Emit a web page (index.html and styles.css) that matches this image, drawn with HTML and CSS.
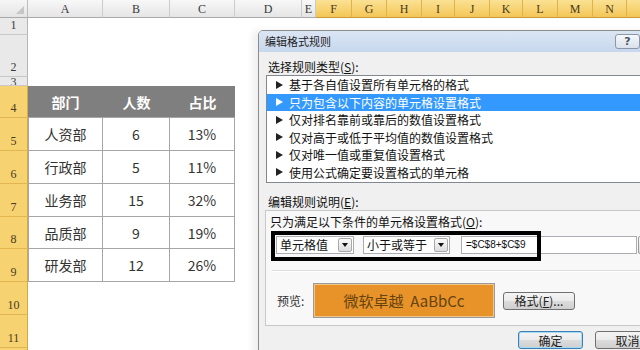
FILE: index.html
```html
<!DOCTYPE html>
<html>
<head>
<meta charset="utf-8">
<link rel="stylesheet" href="styles.css">
</head>
<body>
<div class="screen">
  <div class="colheads">
    <div class="corner"><span class="corner-tri"></span></div>
    <div class="ch w-a">A</div>
    <div class="ch w-b">B</div>
    <div class="ch w-c">C</div>
    <div class="ch w-d">D</div>
    <div class="ch w-e">E</div>
    <div class="ch sel w-f">F</div>
    <div class="ch sel w-g">G</div>
    <div class="ch sel w-h">H</div>
    <div class="ch sel w-i">I</div>
    <div class="ch sel w-j">J</div>
    <div class="ch sel w-k">K</div>
    <div class="ch sel w-l">L</div>
    <div class="ch sel w-m">M</div>
    <div class="ch sel w-n">N</div>
    <div class="ch sel w-o"></div>
  </div>
  <div class="sheet">
    <div class="rowheads">
      <div class="rh r1">1</div>
      <div class="rh r2">2</div>
      <div class="rh r3">3</div>
      <div class="rh sel r4">4</div>
      <div class="rh sel r5">5</div>
      <div class="rh sel r6">6</div>
      <div class="rh sel r7">7</div>
      <div class="rh sel r8">8</div>
      <div class="rh sel r9">9</div>
      <div class="rh sel r10">10</div>
      <div class="rh sel r11">11</div>
      <div class="rh sel r12"></div>
    </div>
    <div class="cells">
      <div class="tbl">
        <div class="th">部门</div><div class="th">人数</div><div class="th">占比</div>
        <div class="td first">人资部</div><div class="td">6</div><div class="td">13%</div>
        <div class="td first">行政部</div><div class="td">5</div><div class="td">11%</div>
        <div class="td first">业务部</div><div class="td">15</div><div class="td">32%</div>
        <div class="td first">品质部</div><div class="td">9</div><div class="td">19%</div>
        <div class="td first">研发部</div><div class="td">12</div><div class="td">26%</div>
      </div>
    </div>
  </div>

  <div class="dialog">
    <div class="titlebar">
      <span class="title">编辑格式规则</span>
      <span class="helpbtn">?</span>
      <span class="closebtn">✕</span>
    </div>
    <div class="dbody">
      <div class="lbl">选择规则类型(<u>S</u>):</div>
      <ul class="list">
        <li><span class="tri"></span>基于各自值设置所有单元格的格式</li>
        <li class="on"><span class="tri"></span>只为包含以下内容的单元格设置格式</li>
        <li><span class="tri"></span>仅对排名靠前或靠后的数值设置格式</li>
        <li><span class="tri"></span>仅对高于或低于平均值的数值设置格式</li>
        <li><span class="tri"></span>仅对唯一值或重复值设置格式</li>
        <li><span class="tri"></span>使用公式确定要设置格式的单元格</li>
      </ul>
      <div class="lbl lbl2">编辑规则说明(<u>E</u>):</div>
      <div class="panel">
        <div class="lbl3">只为满足以下条件的单元格设置格式(<u>O</u>):</div>
        <div class="ctrls">
          <div class="combo c1"><span class="ctext">单元格值</span><span class="arrow"><span class="down"></span></span></div>
          <div class="combo c2"><span class="ctext">小于或等于</span><span class="arrow"><span class="down"></span></span></div>
          <div class="input">=$C$8+$C$9</div>
          <div class="rangebtn"></div>
        </div>
        <div class="sep"></div>
        <div class="prow">
          <span class="plbl">预览:</span>
          <div class="preview">微软卓越&nbsp; AaBbCc</div>
          <div class="btn fmt">格式(<u>F</u>)...</div>
        </div>
      </div>
      <div class="btnrow">
        <div class="btn ok">确定</div>
        <div class="btn cancel">取消</div>
      </div>
    </div>
  </div>

  <div class="annot"></div>
</div>
</body>
</html>
```

FILE: styles.css
```css
* { box-sizing: border-box; margin: 0; padding: 0; }
html, body { width: 640px; height: 350px; overflow: hidden; background: #fff; }
body { font-family: "Noto Sans CJK SC", "Noto Sans", sans-serif; }
.screen { position: relative; width: 640px; height: 350px; overflow: hidden; }

/* column headers */
.colheads { display: flex; height: 18px; }
.corner {
  flex: none; width: 28px; height: 18px; position: relative;
  background: linear-gradient(#f6f6f6, #e4e4e4);
  border-right: 1px solid #bdbdbd; border-bottom: 1px solid #a9a9a9;
}
.corner-tri {
  position: absolute; right: 3px; bottom: 3px; width: 0; height: 0;
  border-left: 8px solid transparent; border-bottom: 8px solid #c6c6c6;
}
.ch {
  flex: none; height: 18px;
  background: linear-gradient(#f8f8f8, #e5e5e5);
  border-right: 1px solid #cbcbcb; border-bottom: 1px solid #a9a9a9;
  font: 12px/19px "Liberation Serif", "DejaVu Serif", serif; color: #3a3a3a;
  text-align: center;
}
.ch.sel {
  background: linear-gradient(#fbe194, #f3c757);
  border-right-color: #e1b24a; border-bottom-color: #c99a35; color: #4a3a20;
}
.w-a { width: 75px; } .w-b { width: 67px; } .w-c { width: 65px; } .w-d { width: 67px; }
.w-e { width: 14px; } .w-f { width: 36px; } .w-g { width: 35px; } .w-h { width: 35px; }
.w-i { width: 33px; } .w-j { width: 35px; } .w-k { width: 33px; } .w-l { width: 35px; }
.w-m { width: 35px; } .w-n { width: 34px; } .w-o { width: 35px; }

/* sheet */
.sheet { display: flex; }
.rowheads { flex: none; width: 28px; display: flex; flex-direction: column; }
.rh {
  flex: none; display: flex; align-items: flex-end; justify-content: center;
  background: #e9e9e9; border-right: 1px solid #b5b5b5; border-bottom: 1px solid #c8c8c8;
  font: 12px/16px "Liberation Serif", "DejaVu Serif", serif; color: #3a3a3a;
  padding-bottom: 1px; overflow: hidden;
}
.rh.sel { background: #f6d271; border-right-color: #d9a93e; border-bottom-color: #e2b550; color: #4a3a20; }
.r1 { height: 17px; } .r2 { height: 42px; }
.r3 { height: 9px; align-items: flex-start; line-height: 11px; padding-bottom: 0; }
.r4 { height: 32px; } .r5 { height: 33px; } .r6 { height: 33px; } .r7 { height: 33px; }
.r8 { height: 32px; } .r9 { height: 33px; } .r10 { height: 33px; } .r11 { height: 33px; } .r12 { height: 33px; }

.cells { flex: 1; }
.tbl {
  margin-top: 68px;
  display: grid;
  grid-template-columns: 75px 67px 65px;
  grid-template-rows: 32px 33px 33px 33px 32px 33px;
}
.th {
  background: #7f7f7f; color: #fff; font-weight: bold; font-size: 14px;
  display: flex; align-items: center; justify-content: center;
  border-bottom: 1px solid #a6a6a6;
}
.td {
  display: flex; align-items: center; justify-content: center;
  font-size: 14px; color: #333;
  border-right: 1px solid #a6a6a6; border-bottom: 1px solid #a6a6a6;
}
.td.first { border-left: 1px solid #a6a6a6; }

/* dialog */
.dialog {
  position: absolute; left: 258px; top: 30px; width: 431px; height: 340px;
  border: 1px solid #8c8c8c; border-radius: 5px 5px 0 0;
  background: #f0f0f0;
  box-shadow: -6px 0 6px rgba(0,0,0,0.06);
  font-size: 12px; color: #111;
}
.titlebar {
  display: flex; align-items: flex-start; height: 21px;
  background: linear-gradient(#dbe6f4, #c7d7ed);
  border-radius: 4px 4px 0 0; padding-right: 4px;
}
.title { font-size: 11px; line-height: 21px; padding-left: 6px; color: #1e1e1e; }
.helpbtn {
  margin-left: auto; margin-top: 3px; width: 25px; height: 15px;
  border: 1px solid #8b97a8; border-radius: 3px;
  background: linear-gradient(#f6f8fb, #d9e1ec);
  font: bold 11px/13px "DejaVu Sans", sans-serif; color: #4a5464; text-align: center;
}
.closebtn {
  margin-left: 1px; margin-top: 3px; width: 43px; height: 15px;
  border: 1px solid #8b97a8; border-radius: 3px;
  background: linear-gradient(#f6f8fb, #d9e1ec);
  font: 10px/13px "DejaVu Sans", sans-serif; color: #333; text-align: center;
}
.dbody { padding: 0 7px; }
.lbl { margin-top: 7px; line-height: 16px; padding-left: 2px; white-space: nowrap; }
.lbl u, .lbl3 u, .btn u { text-decoration: underline; }
.list {
  list-style: none; height: 108px; background: #fff;
  border: 1px solid #828790; padding-top: 0;
}
.list li {
  height: 17.5px; line-height: 17.5px; display: flex; align-items: center;
  white-space: nowrap; color: #111;
}
.list li.on { background: #3399ff; color: #fff; }
.tri {
  flex: none; width: 0; height: 0; margin-left: 9px; margin-right: 6px;
  border-left: 7px solid #222; border-top: 4px solid transparent; border-bottom: 4px solid transparent;
}
.list li.on .tri { border-left-color: #fff; }
.lbl2 { margin-top: 11px; }
.panel {
  margin-left: -1px; height: 116px;
  background: #f8f8f8; border: 1px solid #c8c8c8;
  padding-top: 3px;
}
.lbl3 { line-height: 16px; padding-left: 4px; white-space: nowrap; }
.ctrls { display: flex; margin-top: 6px; margin-left: 10px; height: 18px; }
.combo {
  flex: none; display: flex; align-items: center; height: 18px;
  background: #fff; border: 1px solid #abadb3;
}
.c1 { width: 78px; }
.c2 { width: 87px; margin-left: 9px; }
.ctext { flex: 1; padding-left: 3px; line-height: 16px; white-space: nowrap; }
.arrow {
  flex: none; width: 14px; height: 14px; margin-right: 1px;
  border: 1px solid #a9a9a9; border-radius: 2px;
  background: linear-gradient(#fafafa, #dcdcdc);
  display: flex; align-items: center; justify-content: center;
}
.down {
  width: 0; height: 0;
  border-top: 4px solid #111; border-left: 3px solid transparent; border-right: 3px solid transparent;
}
.input {
  flex: none; width: 176px; margin-left: 11px; height: 18px;
  background: #fff; border: 1px solid #abadb3;
  font: 10px/16px "Liberation Sans", sans-serif; padding-left: 4px; color: #111;
}
.rangebtn {
  flex: none; width: 20px; height: 18px; margin-left: 1px;
  border: 1px solid #9a9a9a; border-radius: 2px; background: linear-gradient(#fafafa, #dcdcdc);
}
.sep { margin-top: 16px; margin-left: 6px; height: 2px; border-top: 1px solid #dcdcdc; border-bottom: 1px solid #fff; }
.prow { display: flex; align-items: center; margin-top: 11px; height: 35px; }
.plbl { flex: none; width: 47px; padding-left: 11px; color: #333; }
.preview {
  flex: none; width: 182px; height: 35px;
  background: #e8922a; border: 1px solid #9a9a9a; box-shadow: inset 0 0 0 1px #f2c58a;
  display: flex; align-items: center; justify-content: center;
  font-size: 15px; color: #65440f; white-space: nowrap;
}
.btn {
  flex: none; display: flex; align-items: center; justify-content: center;
  border: 1px solid #707070; border-radius: 3px;
  background: linear-gradient(#f4f4f4 0%, #ebebeb 50%, #dcdcdc 51%, #cfcfcf 100%);
  font-size: 12px; color: #222; white-space: nowrap;
}
.fmt { width: 72px; height: 18px; margin-left: 8px; }
.btnrow { display: flex; margin-top: 5px; padding-left: 252px; }
.ok { width: 65px; height: 18px; border-color: #3c7fb1; box-shadow: inset 0 0 0 1px #a8daf5; }
.cancel { width: 65px; height: 18px; margin-left: 12px; }

/* black annotation rectangle drawn over the dialog */
.annot {
  position: absolute; left: 271px; top: 231px; width: 270px; height: 30px;
  border: 4px solid #000;
}
```
